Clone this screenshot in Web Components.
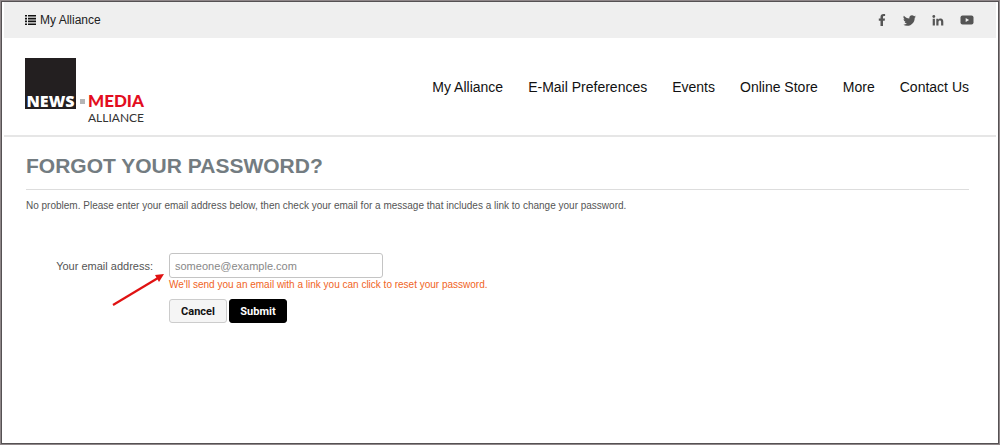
<!DOCTYPE html>
<html lang="en">
<head>
<meta charset="utf-8">
<meta name="viewport" content="width=device-width, initial-scale=1">
<title>Forgot your password?</title>
<style>
  html, body { margin: 0; }
  body { font-family: "Liberation Sans", Arial, sans-serif; background: #fff; }
</style>
</head>
<body>
<alliance-page>
  <top-bar slot="top"></top-bar>
  <site-header slot="header">
    <nav-link href="#alliance">My Alliance</nav-link>
    <nav-link href="#preferences">E-Mail Preferences</nav-link>
    <nav-link href="#events">Events</nav-link>
    <nav-link href="#store">Online Store</nav-link>
    <nav-link href="#more">More</nav-link>
    <nav-link href="#contact">Contact Us</nav-link>
  </site-header>
  <password-panel></password-panel>
</alliance-page>

<script>
const define = (name, html, setup) => {
  const template = document.createElement('template');
  template.innerHTML = html;
  customElements.define(name, class extends HTMLElement {
    constructor() {
      super();
      this.attachShadow({ mode: 'open' }).append(template.content.cloneNode(true));
    }
    connectedCallback() { if (setup) setup(this); }
  });
};

define('alliance-page', `
  <style>
    :host { display: block; box-sizing: border-box; min-height: 100vh; border: 1px solid #8f8789; }
    .frame { box-sizing: border-box; min-height: calc(100vh - 2px); border: 1px solid #555153; }
  </style>
  <div class="frame"><slot name="top"></slot><slot name="header"></slot><main><slot></slot></main></div>`);

define('top-bar', `
  <style>
    :host { display: flex; justify-content: space-between; align-items: center; height: 36px;
      margin: 0 2px; padding: 0 22px 0 21px; background: #efefef; }
    a { display: flex; align-items: center; color: inherit; text-decoration: none; }
    .home { gap: 4px; color: #222; font-size: 12px; }
    .social { display: flex; gap: 16px; color: #555; }
    svg { display: block; }
  </style>
  <a class="home" href="#home">
    <svg width="11" height="10" viewBox="0 0 11 10" fill="#111" aria-hidden="true"><path d="M0 0h2v1.600H0zM3 0h8v1.600H3zM0 2.800h2v1.600H0zM3 2.800h8v1.600H3zM0 5.600h2v1.600H0zM3 5.600h8v1.600H3zM0 8.400h2V10H0zM3 8.400h8V10H3z"/></svg>
    <span>My Alliance</span>
  </a>
  <div class="social">
    <a href="#facebook" aria-label="Facebook"><svg width="9" height="12" viewBox="0 0 9 12" fill="currentColor"><path d="M2.500 12V6.700H.8V4.500h1.700V3C2.500 1 3.600 0 5.500 0c.9 0 1.600.1 1.600.1v1.900H6.200C5.300 2 5 2.500 5 3.100v1.400h2L6.700 6.700H5V12z"/></svg></a>
    <a href="#twitter" aria-label="Twitter"><svg width="13" height="13" viewBox="0 0 24 24" fill="currentColor"><path d="M23.950 4.570a10 10 0 0 1-2.820.77 4.960 4.960 0 0 0 2.160-2.720c-.95.560-2 .95-3.120 1.180a4.920 4.920 0 0 0-8.390 4.480C7.690 8.090 4.070 6.130 1.640 3.160a4.920 4.920 0 0 0 1.520 6.570 4.900 4.900 0 0 1-2.230-.61v.06a4.920 4.920 0 0 0 3.950 4.830 5 5 0 0 1-2.210.08 4.940 4.940 0 0 0 4.600 3.420A9.870 9.870 0 0 1 0 19.540a14 14 0 0 0 7.560 2.210c9.050 0 14-7.500 14-13.980v-.64a9.940 9.940 0 0 0 2.390-2.560z"/></svg></a>
    <a href="#linkedin" aria-label="LinkedIn"><svg width="12" height="13" viewBox="0 0 12 12" fill="currentColor"><circle cx="1.800" cy="2" r="1.400"/><path d="M.7 4.300h2.200V11H.7zM4.300 4.300h2.100v.9c.4-.6 1.100-1.100 2.200-1.100 2 0 2.700 1.300 2.700 3.200V11H9.100V7.600c0-1-.2-1.600-1.200-1.600-1 0-1.400.7-1.400 1.700V11H4.300z"/></svg></a>
    <a href="#youtube" aria-label="YouTube"><svg width="14" height="10" viewBox="0 0 14 10"><rect x=".5" y=".5" width="13" height="9" rx="2" fill="currentColor"/><path d="M5.700 3v4l3.400-2z" fill="#efefef"/></svg></a>
  </div>`);

define('nav-link', `
  <style>
    :host { display: block; }
    a { color: #111; font-size: 14px; line-height: 20px; text-decoration: none; white-space: nowrap; }
  </style>
  <a><slot></slot></a>`,
  el => { el.shadowRoot.querySelector('a').href = el.getAttribute('href'); });

define('brand-logo', `
  <style>
    :host { display: block; }
    a { display: grid; grid-template-columns: 51px 12px auto; color: inherit; text-decoration: none; }
    .news { display: flex; align-items: flex-end; justify-content: center; box-sizing: border-box; width: 51px; height: 51px;
      background: #231f20; color: #fff; font: 800 16px/16px "Open Sans", sans-serif; }
    .dot { align-self: end; justify-self: center; width: 5px; height: 5px; margin-bottom: 5px; background: #b5b5b5; }
    .media { align-self: end; color: #e30d20; font: 900 17px/16px Lato, sans-serif; }
    .alliance { grid-column: 3; color: #333; font: 12px/18px Lato, sans-serif; }
  </style>
  <a href="#home"><span class="news">NEWS</span><span class="dot"></span><span class="media">MEDIA</span><span class="alliance">ALLIANCE</span></a>`);

define('site-header', `
  <style>
    :host { display: flex; justify-content: space-between; align-items: center; box-sizing: border-box; height: 99px;
      margin: 0 2px; padding: 0 27px 0 21px; border-bottom: 2px solid #e6e6e6; }
    brand-logo { padding-top: 12px; }
    nav { display: flex; gap: 25px; }
  </style>
  <brand-logo></brand-logo>
  <nav aria-label="Main"><slot></slot></nav>`);

define('password-panel', `
  <style>
    :host { display: block; padding: 16px 29px 0 24px; }
    h1 { margin: 0; padding-bottom: 10px; border-bottom: 1px solid #ddd; color: #737c81; font-size: 21px; line-height: 26px; }
    p { margin: 8px 0 0; color: #555; font-size: 10px; line-height: 16px; }
    form { display: grid; grid-template-columns: 127px auto; column-gap: 16px; margin-top: 39px; justify-content: start; }
    label { position: relative; justify-self: end; color: #555; font-size: 11px; line-height: 26px; }
    .arrow { position: absolute; top: 20px; right: -12px; }
    input { box-sizing: border-box; width: 214px; height: 25px; margin: 0; padding: 0 5px; border: 1px solid #c4c4c4;
      border-radius: 3px; background: #fff; color: #555; font: 11px "Liberation Sans", Arial, sans-serif; }
    input::placeholder { color: #888; opacity: 1; }
    .field { display: grid; }
    .hint { color: #f0641e; font-size: 10px; line-height: 14px; }
    .actions { display: flex; gap: 2px; margin-top: 7px; }
    button { box-sizing: border-box; height: 24px; width: 58px; margin: 0; padding: 0; border: 1px solid #ccc; border-radius: 3px;
      background: #f5f5f5; color: #111; font: bold 11px Roboto, sans-serif; }
    .submit { border-color: #000; background: #000; color: #fff; }
  </style>
  <h1>FORGOT YOUR PASSWORD?</h1>
  <p>No problem. Please enter your email address below, then check your email for a message that includes a link to change your password.</p>
  <form>
    <label for="email">Your email address:
      <svg class="arrow" width="54" height="34" viewBox="0 0 54 34" aria-hidden="true"><path d="M2 32L47 5" stroke="#e01212" stroke-width="2.200"/><path d="M53 1l-5 8-4-7z" fill="#e01212"/></svg>
    </label>
    <div class="field">
      <input id="email" type="email" placeholder="someone@example.com" aria-describedby="hint">
      <span class="hint" id="hint">We'll send you an email with a link you can click to reset your password.</span>
      <div class="actions"><button type="button">Cancel</button><button class="submit" type="submit">Submit</button></div>
    </div>
  </form>`);
</script>
</body>
</html>
